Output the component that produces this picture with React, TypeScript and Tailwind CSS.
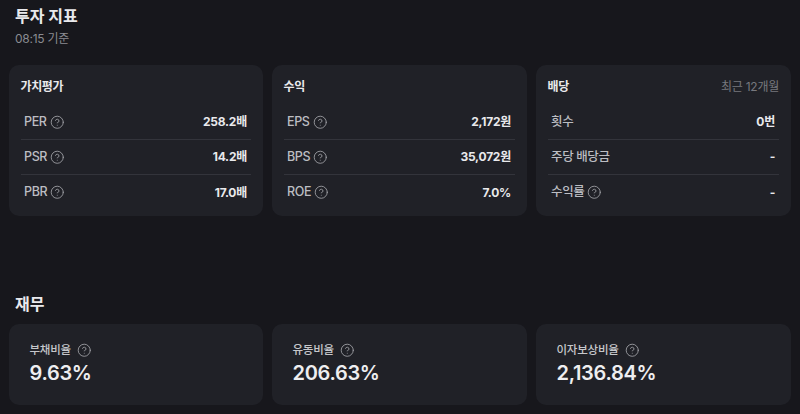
import { CircleHelp } from 'lucide-react';

const font = 'font-["Inter","Noto_Sans_CJK_KR",sans-serif]';

interface Row {
  label: string;
  value: string;
  help?: boolean;
}

interface Metric {
  title: string;
  note?: string;
  rows: Row[];
}

const metrics: Metric[] = [
  {
    title: '가치평가',
    rows: [
      { label: 'PER', value: '258.2배', help: true },
      { label: 'PSR', value: '14.2배', help: true },
      { label: 'PBR', value: '17.0배', help: true },
    ],
  },
  {
    title: '수익',
    rows: [
      { label: 'EPS', value: '2,172원', help: true },
      { label: 'BPS', value: '35,072원', help: true },
      { label: 'ROE', value: '7.0%', help: true },
    ],
  },
  {
    title: '배당',
    note: '최근 12개월',
    rows: [
      { label: '횟수', value: '0번' },
      { label: '주당 배당금', value: '-' },
      { label: '수익률', value: '-', help: true },
    ],
  },
];

const finance = [
  { label: '부채비율', value: '9.63%' },
  { label: '유동비율', value: '206.63%' },
  { label: '이자보상비율', value: '2,136.84%' },
];

const Help = () => <CircleHelp className="w-[14.5px] h-[14.5px] text-[#a4a5aa]" strokeWidth={1.4} />;

export default function App() {
  return (
    <div className={`${font} w-[800px] h-[414px] overflow-hidden bg-[#17171c] px-[9px] pt-[5px]`}>
      <div className="px-[6px]">
        <h2 className="text-[16px] leading-[22px] font-bold text-[#e9e9ec]">투자 지표</h2>
        <p className="mt-[3px] text-[12px] leading-[18px] tracking-[-0.02em] text-[#8a8b91]">08:15 기준</p>
      </div>

      <div className="mt-[17px] grid grid-cols-[254px_255px_255px] gap-[9px]">
        {metrics.map((card) => (
          <section key={card.title} className="h-[151px] rounded-[10px] bg-[#202127] px-[12px] pt-[13px]">
            <div className="flex items-center justify-between h-[18px]">
              <h3 className="-ml-[0.5px] text-[12px] font-bold tracking-[-0.03em] text-[#e9e9ec]">{card.title}</h3>
              {card.note && <span className="text-[12px] tracking-[-0.02em] text-[#77787e]">{card.note}</span>}
            </div>
            <div className="mt-[9px]">
              {card.rows.map((row, i) => (
                <div
                  key={row.label}
                  className={`flex h-[35px] items-center justify-between px-[3px] ${i < 2 ? 'border-b border-[#33343b]' : ''}`}
                >
                  <span className="flex items-center gap-[3px] text-[12.5px] font-medium tracking-[-0.03em] text-[#bcbdc2]">
                    {row.label}
                    {row.help && <Help />}
                  </span>
                  <span className="pr-[1px] text-[12px] font-bold tracking-[-0.02em] text-[#e9e9ec]">{row.value}</span>
                </div>
              ))}
            </div>
          </section>
        ))}
      </div>

      <h2 className="mt-[76px] px-[6px] text-[16px] leading-[24px] font-bold text-[#e9e9ec]">재무</h2>

      <div className="mt-[8px] grid grid-cols-[254px_255px_255px] gap-[9px]">
        {finance.map((item) => (
          <section key={item.label} className="h-[81px] rounded-[10px] bg-[#202127] pl-[20.5px] pt-[17px]">
            <div className="flex items-center gap-[6px] text-[11.5px] leading-[18px] font-medium tracking-[-0.02em] text-[#c6c7cb]">
              {item.label}
              <Help />
            </div>
            <div className="mt-[1px] text-[20px] leading-[26px] font-semibold tracking-[-0.015em] text-[#eeeef0]">{item.value}</div>
          </section>
        ))}
      </div>
    </div>
  );
}
